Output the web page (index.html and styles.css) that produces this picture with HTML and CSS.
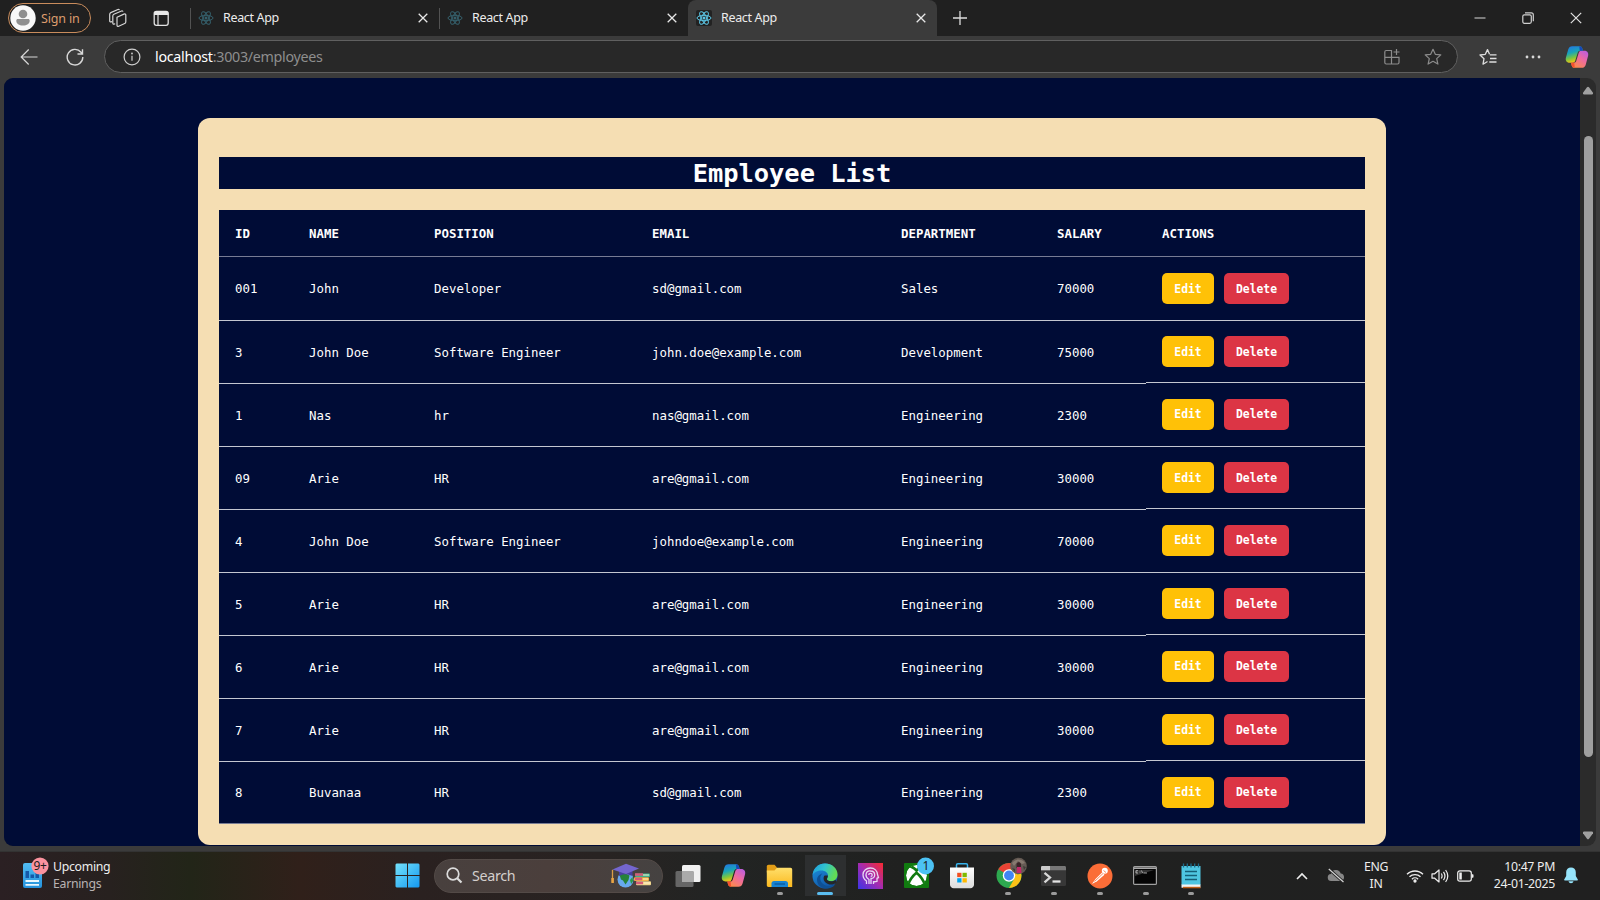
FILE: index.html
```html
<!DOCTYPE html>
<html lang="en">
<head>
<meta charset="utf-8">
<title>React App</title>
<link rel="stylesheet" href="styles.css">
</head>
<body>
<svg class="defs" width="0" height="0" aria-hidden="true">
  <defs>
    <linearGradient id="cpA" x1="0" y1="0" x2="0.3" y2="1"><stop offset="0" stop-color="#2470e8"/><stop offset=".45" stop-color="#19a5b8"/><stop offset=".75" stop-color="#7cc53f"/><stop offset="1" stop-color="#f2c518"/></linearGradient>
    <linearGradient id="cpB" x1="1" y1="0" x2="0.3" y2="1"><stop offset="0" stop-color="#b35be8"/><stop offset=".5" stop-color="#ee6aa0"/><stop offset="1" stop-color="#fb8a4c"/></linearGradient>
    <linearGradient id="win" x1="0" y1="0" x2="1" y2="1"><stop offset="0" stop-color="#74e2fb"/><stop offset="1" stop-color="#1498f0"/></linearGradient>
    <linearGradient id="news" x1="0" y1="0" x2="0" y2="1"><stop offset="0" stop-color="#52bdf3"/><stop offset="1" stop-color="#2592dc"/></linearGradient>
    <linearGradient id="fold" x1="0" y1="0" x2="0" y2="1"><stop offset="0" stop-color="#ffdf6b"/><stop offset="1" stop-color="#fbb91f"/></linearGradient>
    <linearGradient id="edgeA" x1="0" y1="0" x2="1" y2="0.3"><stop offset="0" stop-color="#1f9be0"/><stop offset=".5" stop-color="#30c3cf"/><stop offset="1" stop-color="#62dc55"/></linearGradient>
    <linearGradient id="edgeB" x1="0" y1="0" x2="0.6" y2="1"><stop offset="0" stop-color="#1d95e2"/><stop offset="1" stop-color="#1054a4"/></linearGradient>
    <linearGradient id="headG" x1="0" y1="1" x2="1" y2="0"><stop offset="0" stop-color="#3b35e8"/><stop offset=".5" stop-color="#a52bb0"/><stop offset="1" stop-color="#f92a2f"/></linearGradient>
    <linearGradient id="bag" x1="0" y1="0" x2="0" y2="1"><stop offset="0" stop-color="#ffffff"/><stop offset="1" stop-color="#dcdcdc"/></linearGradient>
    <clipPath id="ball"><circle cx="13.500" cy="18.500" r="10.500"/></clipPath>
    <symbol id="react" viewBox="0 0 16 16"><g fill="none" stroke="currentColor" stroke-width="1"><ellipse cx="8" cy="8" rx="7" ry="2.7"/><ellipse cx="8" cy="8" rx="7" ry="2.7" transform="rotate(60 8 8)"/><ellipse cx="8" cy="8" rx="7" ry="2.7" transform="rotate(120 8 8)"/></g><circle cx="8" cy="8" r="1.5" fill="currentColor"/></symbol>
    <symbol id="x" viewBox="0 0 12 12"><path d="M1.700 1.700l8.600 8.600M10.300 1.700l-8.600 8.600" fill="none" stroke="#e8e8e8" stroke-width="1.3"/></symbol>
    <symbol id="copilot" viewBox="0 0 24 24"><path d="M7.200 1.200h7.300c1.600 0 2.400.9 2.800 2.300l.6 2.200h-2.600c-1.500 0-2.300.8-2.700 2.200L10.300 15.600c-.5 1.600-1.300 2.200-2.800 2.200H4.500C1.700 17.800.2 15.600.9 12.800L3.200 4.600C3.800 2.300 5.200 1.200 7.200 1.200z" fill="url(#cpA)"/><path d="M16.800 22.800H9.500c-1.600 0-2.400-.9-2.800-2.300l-.6-2.700h2.600c1.500 0 2.300-.8 2.700-2.200l2.300-7.700c.5-1.600 1.300-2.200 2.800-2.200h3c2.800 0 4.300 2.200 3.600 5l-2.300 8.700c-.6 2.300-2 3.400-4 3.400z" fill="url(#cpB)"/><path d="M14.300 1.200c1.700 0 2.600.9 3 2.300l.6 2.200h-3.200z" fill="#1749b8"/><path d="M9.700 22.800c-1.700 0-2.600-.9-3-2.300l-.6-2.700h3.200z" fill="#f5512e"/></symbol>
  </defs>
</svg>

<div class="screen">
  <header class="tabbar">
    <div class="signin">
      <svg width="26" height="26" viewBox="0 0 26 26"><circle cx="13" cy="13" r="12.700" fill="#f8f8f8"/><circle cx="13" cy="9" r="4.300" fill="#8f8f8f"/><path d="M6.300 15.500c0-.9.7-1.500 1.500-1.500h10.400c.8 0 1.500.6 1.500 1.500 0 3.300-2.700 5-6.700 5s-6.700-1.700-6.700-5z" fill="#8f8f8f"/></svg>
      <span>Sign in</span>
    </div>
    <svg class="tool-workspaces" width="20" height="20" viewBox="0 0 20 20" fill="none" stroke="#d6d6d6" stroke-width="1.200" stroke-linejoin="round"><path d="M9 9.200l6.900-3.100c1-.4 1.900 0 1.900.9v6.800c0 .8-.4 1.400-1.100 1.700l-6 2.700c-1 .4-1.700 0-1.700-.9z"/><path d="M7.200 15.700l-1.200.4c-.7.200-1.200-.2-1.200-1V8c0-.9.4-1.500 1.100-1.800L13.500 3c.7-.3 1.300 0 1.500.7"/><path d="M4 13.600l-.9.300c-.8.200-1.400-.2-1.400-1V6.400c0-.9.400-1.500 1.100-1.800L9.900 1.500c.7-.3 1.400 0 1.600.7"/></svg>
    <svg class="tool-vertical" width="17" height="17" viewBox="0 0 17 17"><rect x="1.200" y="1.500" width="14" height="13.800" rx="2.200" fill="none" stroke="#e2e2e2" stroke-width="1.300"/><path d="M1 5V3.500C1 2 2 1 3.400 1H13c1.400 0 2.400 1 2.400 2.500V5z" fill="#e8e8e8"/><path d="M5 5v10" stroke="#e2e2e2" stroke-width="1.200"/></svg>
    <div class="tab dim"><svg class="fav" width="16" height="16"><use href="#react"/></svg><span>React App</span><svg class="close" width="12" height="12"><use href="#x"/></svg></div>
    <div class="tab dim"><svg class="fav" width="16" height="16"><use href="#react"/></svg><span>React App</span><svg class="close" width="12" height="12"><use href="#x"/></svg></div>
    <div class="tab active"><svg class="fav" width="16" height="16"><use href="#react"/></svg><span>React App</span><svg class="close" width="12" height="12"><use href="#x"/></svg></div>
    <svg class="newtab" width="16" height="16" viewBox="0 0 16 16"><path d="M8 1v14M1 8h14" stroke="#dcdcdc" stroke-width="1.300"/></svg>
    <div class="winctl">
      <svg width="12" height="12" viewBox="0 0 12 12"><path d="M.5 6h11" stroke="#c9c9c9" stroke-width="1.100"/></svg>
      <svg width="12" height="12" viewBox="0 0 12 12" fill="none" stroke="#d0d0d0" stroke-width="1.200"><rect x=".8" y="2.800" width="8.500" height="8.500" rx="1.500"/><path d="M3 .8h6.300c1.200 0 2 .8 2 2v6.400"/></svg>
      <svg width="12" height="12" viewBox="0 0 12 12"><path d="M.8.8l10.400 10.400M11.200.8L.8 11.200" stroke="#e2e2e2" stroke-width="1.200"/></svg>
    </div>
  </header>

  <div class="toolbar">
    <svg class="back" width="18" height="18" viewBox="0 0 18 18" fill="none" stroke="#d8d8d8" stroke-width="1.200"><path d="M17.500 9H1.200M8.700 1.500L1.200 9l7.500 7.500"/></svg>
    <svg class="reload" width="18" height="18" viewBox="0 0 18 18" fill="none" stroke="#d8d8d8" stroke-width="1.400"><path d="M16.800 9A7.800 7.800 0 1 1 15 4.200l1.500 1.800M16.500 1.200V6h-5"/></svg>
    <div class="address">
      <svg width="18" height="18" viewBox="0 0 18 18"><circle cx="9" cy="9" r="7.900" fill="none" stroke="#d0d0d0" stroke-width="1.200"/><path d="M9 7.800v5" stroke="#d0d0d0" stroke-width="1.200"/><circle cx="9" cy="5.500" r=".9" fill="#d0d0d0"/></svg>
      <span class="url"><b>localhost</b>:3003/employees</span>
      <svg class="apps" width="16" height="16" viewBox="0 0 16 16" fill="none" stroke="#8c8c8c" stroke-width="1.200"><path d="M7.500 15V1.500H2.300c-.9 0-1.500.6-1.500 1.500v10.500c0 .9.600 1.500 1.500 1.500h11.200c.9 0 1.500-.6 1.500-1.500V8.300H.8M12.500 0v6M9.500 3h6"/></svg>
      <svg class="star" width="18" height="18" viewBox="0 0 18 18" fill="none" stroke="#8c8c8c" stroke-width="1.200" stroke-linejoin="round"><path d="M9 1.300l2.300 5 5.500.6-4.100 3.700 1.200 5.500L9 13.300l-4.900 2.800 1.200-5.500L1.200 6.900l5.500-.6z"/></svg>
    </div>
    <svg class="favs" width="18" height="18" viewBox="0 0 18 18" fill="none" stroke="#dedede" stroke-width="1.300" stroke-linejoin="round"><path d="M10.500 6.300L8.500 1.600 6.300 6.300 1 7l4 3.700L4 16.200l4.500-2.700M10.800 6.900H17.500M11 10.500h6.500M10.300 14h7.200"/></svg>
    <svg class="dots" width="16" height="4" viewBox="0 0 16 4" fill="#d8d8d8"><circle cx="2" cy="2" r="1.400"/><circle cx="8" cy="2" r="1.400"/><circle cx="14" cy="2" r="1.400"/></svg>
    <svg class="cp" width="24" height="24"><use href="#copilot"/></svg>
  </div>

  <main class="viewport">
    <div class="page">
      <section class="card">
        <h1>Employee List</h1>
        <div class="table">
          <div class="row head"><div class="c1">ID</div><div class="c2">NAME</div><div class="c3">POSITION</div><div class="c4">EMAIL</div><div class="c5">DEPARTMENT</div><div class="c6">SALARY</div><div class="c7">ACTIONS</div></div>
          <div class="row tall"><div class="c1">001</div><div class="c2">John</div><div class="c3">Developer</div><div class="c4">sd@gmail.com</div><div class="c5">Sales</div><div class="c6">70000</div><div class="c7"><button class="edit">Edit</button><button class="del">Delete</button></div></div>
          <div class="row up first"><div class="c1">3</div><div class="c2">John Doe</div><div class="c3">Software Engineer</div><div class="c4">john.doe@example.com</div><div class="c5">Development</div><div class="c6">75000</div><div class="c7"><button class="edit">Edit</button><button class="del">Delete</button></div></div>
          <div class="row"><div class="c1">1</div><div class="c2">Nas</div><div class="c3">hr</div><div class="c4">nas@gmail.com</div><div class="c5">Engineering</div><div class="c6">2300</div><div class="c7"><button class="edit">Edit</button><button class="del">Delete</button></div></div>
          <div class="row up"><div class="c1">09</div><div class="c2">Arie</div><div class="c3">HR</div><div class="c4">are@gmail.com</div><div class="c5">Engineering</div><div class="c6">30000</div><div class="c7"><button class="edit">Edit</button><button class="del">Delete</button></div></div>
          <div class="row"><div class="c1">4</div><div class="c2">John Doe</div><div class="c3">Software Engineer</div><div class="c4">johndoe@example.com</div><div class="c5">Engineering</div><div class="c6">70000</div><div class="c7"><button class="edit">Edit</button><button class="del">Delete</button></div></div>
          <div class="row up"><div class="c1">5</div><div class="c2">Arie</div><div class="c3">HR</div><div class="c4">are@gmail.com</div><div class="c5">Engineering</div><div class="c6">30000</div><div class="c7"><button class="edit">Edit</button><button class="del">Delete</button></div></div>
          <div class="row"><div class="c1">6</div><div class="c2">Arie</div><div class="c3">HR</div><div class="c4">are@gmail.com</div><div class="c5">Engineering</div><div class="c6">30000</div><div class="c7"><button class="edit">Edit</button><button class="del">Delete</button></div></div>
          <div class="row up"><div class="c1">7</div><div class="c2">Arie</div><div class="c3">HR</div><div class="c4">are@gmail.com</div><div class="c5">Engineering</div><div class="c6">30000</div><div class="c7"><button class="edit">Edit</button><button class="del">Delete</button></div></div>
          <div class="row last"><div class="c1">8</div><div class="c2">Buvanaa</div><div class="c3">HR</div><div class="c4">sd@gmail.com</div><div class="c5">Engineering</div><div class="c6">2300</div><div class="c7"><button class="edit">Edit</button><button class="del">Delete</button></div></div>
        </div>
      </section>
    </div>
    <div class="scrollbar">
      <svg width="12" height="9" viewBox="0 0 12 9"><path d="M5 1.200Q6 .2 7 1.200l4 5.500Q11.500 8.300 10 8.500H2Q.5 8.300 1 6.700z" fill="#a0a0a0"/></svg>
      <div class="thumb"></div>
      <svg width="12" height="9" viewBox="0 0 12 9"><path d="M5 7.800Q6 8.800 7 7.800l4-5.500Q11.500.700 10 .5H2Q.5.700 1 2.300z" fill="#a0a0a0"/></svg>
    </div>
  </main>

  <footer class="taskbar">
    <div class="widget">
      <svg width="26" height="32" viewBox="0 0 26 32"><rect x="0" y="6" width="19" height="25" rx="2" fill="url(#news)"/><path d="M2.500 14h3.500v7H2.500zM7.500 17.500h3.500v3.500H7.500zM12.500 15.500H16v5.500h-3.500z" fill="#1559a8"/><path d="M2.500 24h13.500M2.500 27.800h13.500" stroke="#e9f8ff" stroke-width="1.800"/><circle cx="17" cy="9" r="8.600" fill="#fb939f"/><text x="10.500" y="13.300" class="badge-text">9+</text></svg>
      <div class="wtext"><span>Upcoming</span><span class="sub">Earnings</span></div>
    </div>
    <svg class="start" width="25" height="25" viewBox="0 0 25 25"><path d="M1.500.5H12v11.500H.5V1.500zM13 .5h10.500l1 1V12H13zM.5 13H12v11.500H1.500l-1-1zM13 13h11.500v10.500l-1 1H13z" fill="url(#win)"/></svg>
    <div class="search">
      <svg width="17" height="17" viewBox="0 0 17 17" fill="none" stroke="#dcdcdc"><circle cx="7" cy="7" r="5.800" stroke-width="1.700"/><path d="M11.200 11.200L15.500 15.500" stroke-width="2.200"/></svg>
      <span>Search</span>
      <svg class="school" width="42" height="26" viewBox="0 0 42 26"><circle cx="15.500" cy="16.500" r="8" fill="#67a9ef"/><path d="M9.500 12l5-2 5 2.500-1 4.500-3 4.500-2.500-4-2-1z" fill="#25823a"/><path d="M20 17l2.500-3 .6 4-2 3z" fill="#2b9a45"/><path d="M9 8v5q6-3.500 13.500 0V8z" fill="#49409c"/><path d="M2.500 6.500L16 .8 29 5.500 16 11z" fill="#7466cf"/><path d="M2.500 6.800v12" stroke="#dc9d45" stroke-width="1.300"/><path d="M1.300 15h2.600v5H1.300z" fill="#e8a545"/><rect x="25" y="10.500" width="15" height="3.600" rx="1" fill="#3faf8e"/><rect x="24" y="14.300" width="15" height="3.800" rx="1" fill="#f2b548"/><rect x="26" y="18.200" width="15" height="4" rx="1" fill="#f1d78f"/><path d="M25 11.500h8M25 16h7M26 20h7" stroke="#d65a78" stroke-width="2.300"/><path d="M33 12h6M33 16h5M34 20h6" stroke="#fff3cf" stroke-width="1"/></svg>
    </div>
    <div class="apps-row">
      <div class="app"><svg width="26" height="24" viewBox="0 0 26 24"><rect x="7" y="1" width="18.500" height="17" rx="1.500" fill="#f1f1f1"/><rect x=".5" y="7" width="18" height="16" rx="1.500" fill="#666"/><path d="M7 7h11.500v11H7z" fill="#aaa"/></svg></div>
      <div class="app"><svg width="25" height="25"><use href="#copilot"/></svg></div>
      <div class="app run"><svg width="27" height="24" viewBox="0 0 27 24"><path d="M.8 2.500C.8 1.500 1.500.8 2.500.8H8.500L11 3.500v5H.8z" fill="#e39e17"/><path d="M.8 6.500H8.500L11 3.800h13.500c1 0 1.700.7 1.700 1.700V23H2.500c-1 0-1.700-.7-1.700-1.700z" fill="url(#fold)"/><path d="M5.500 23v-3.500c0-1.500 1-2.500 2.500-2.500h11.500c1.500 0 2.500 1 2.500 2.500V23z" fill="#1683d2"/><path d="M8.500 20h10.500" stroke="#0c5ea3" stroke-width="1.500"/></svg></div>
      <div class="app run on"><svg width="26" height="26" viewBox="0 0 26 26"><circle cx="13" cy="13" r="12.500" fill="url(#edgeB)"/><path d="M.6 12C1.200 5.200 6.500.5 13 .5c7 0 12.500 4.800 12.500 11 0 4.300-3 6.700-6.500 6.700-2.700 0-4.300-1.200-4-2.500.5-1 1-1.500 1-3C16 9.800 13 7.600 9.500 7.600 5.500 7.600 1.700 9.500.6 12z" fill="url(#edgeA)"/><path d="M10.500 10.500c-2.700 2-3 6.500-.5 9.500 3 3.500 8.500 4.200 13.500.8-1.500 3.300-5.500 5-10 4.800C8 24.500 5 21 5 16.700c0-2.700 2.300-5.500 5.500-6.200z" fill="#0e5095"/><path d="M15 15.700c-.3 1.300 1.300 2.500 4 2.500 1.700 0 3.300-.5 4.500-1.500l1 2.500c-2.500 2.500-6 3-9 1.500-3.500-1.500-4.800-5-3.300-8 2.300-.5 3.800 0 3.800 0z" fill="#242628"/></svg></div>
      <div class="app"><svg width="25" height="26" viewBox="0 0 25 26" fill="none" stroke="#e8d8f4" stroke-width="1.300"><rect width="25" height="26" fill="url(#headG)" stroke="none"/><path d="M8.500 21v-3C5.500 16 5 13.500 5 11.500 5.200 7.500 8.500 5 12.300 5c4.300 0 7 2.800 7.200 6.500l1 3.200-1.500.6v3c-2 .6-3.500.4-3.500.4V21"/><path d="M11 21v-4.500C8.500 15 7.800 13.300 8 11.700 8.300 9.300 10.300 7.800 12.500 8c2.500 0 4.200 1.800 4.200 4s-1.700 3.600-3.700 3.500V21M10.700 12c0-2.300 3.500-2.300 3.500 0 0 1.500-1.500 1.500-1.500 1.500"/></svg></div>
      <div class="app"><svg width="32" height="32" viewBox="0 0 32 32" class="badged"><rect x="1" y="6" width="25" height="25" rx="1" fill="#117b10"/><g clip-path="url(#ball)"><circle cx="13.500" cy="18.500" r="10.500" fill="#fff"/><path d="M4 30.500C6 24 9.500 19 13.500 15.800 17.500 19 21 24 23 30.500M5.500 9.500C8.500 9 11.500 11.500 13.500 13.500 15.500 11.500 18.500 9 21.500 9.500" fill="none" stroke="#117b10" stroke-width="2.700"/></g></g><circle cx="22.500" cy="9" r="8.500" fill="#4cc2f4"/><text x="19.600" y="13.200" class="badge-text">1</text></svg></div>
      <div class="app"><svg width="26" height="27" viewBox="0 0 26 27"><path d="M7.500 8V3c0-.8.5-1.300 1.300-1.300h8.400c.8 0 1.300.5 1.300 1.300v5" fill="none" stroke="#38b4ed" stroke-width="1.500"/><path d="M1 5.500h24v17c0 2-1.500 3.700-3.700 3.700H4.700C2.500 26.200 1 24.500 1 22.500z" fill="url(#bag)"/><path d="M8.200 10.800h4.300v4.300H8.200z" fill="#f25022"/><path d="M13.500 10.800h4.300v4.300h-4.300z" fill="#7fba00"/><path d="M8.200 16.200h4.300v4.300H8.200z" fill="#00a4ef"/><path d="M13.500 16.200h4.300v4.300h-4.300z" fill="#ffb900"/></svg></div>
      <div class="app run"><svg width="32" height="32" viewBox="0 0 32 32" class="badged chrome"><circle cx="14" cy="18.500" r="12.500" fill="#2da94f"/><path d="M14 18.500L3.200 12.200A12.500 12.500 0 0 1 24.800 12.200z" fill="#ea4335"/><path d="M14 12.300h10.800A12.500 12.500 0 0 1 14 31l5.400-9.400z" fill="#fbc116"/><circle cx="14" cy="18.500" r="6.200" fill="#fff"/><circle cx="14" cy="18.500" r="4.900" fill="#4285f4"/><circle cx="23.500" cy="9" r="8.300" fill="#655b54"/><path d="M17 6c3-4 9-5 13 0l-3 1-4-3-4 5z" fill="#877a70"/><path d="M21.500 7c1-2.500 3.500-2.500 4.500 0v4h-4.500z" fill="#3a2428"/><path d="M22 10h4l.5 6h-5z" fill="#c52768"/><path d="M17 11l3 1v3zM28 9l3 1-2 3z" fill="#3f3d38"/></svg></div>
      <div class="app run"><svg width="25" height="20" viewBox="0 0 25 20"><rect width="25" height="20" rx="1.500" fill="#373737"/><path d="M0 4.200V1.500C0 .6.600 0 1.500 0h22c.9 0 1.500.6 1.500 1.500v2.700z" fill="#777"/><path d="M0 4.200V1.500C0 .6.600 0 1.500 0H9v4.200z" fill="#cacaca"/><path d="M3.500 6.800L9 11.500l-5.500 4.800" fill="none" stroke="#d8d8d8" stroke-width="2.300"/><path d="M11.500 15.500h8" stroke="#e4e4e4" stroke-width="2.300"/></svg></div>
      <div class="app run"><svg width="26" height="26" viewBox="0 0 26 26"><circle cx="13" cy="13" r="12.500" fill="#fb6d37"/><circle cx="17.800" cy="7.800" r="3" fill="#fff"/><path d="M15.300 9.300L8.500 16 5 21l5-2.800 7.500-6.500z" fill="#fff"/><path d="M7.500 18.500l8.500-8M16.500 7.500l2.500 2" stroke="#fb6d37" stroke-width=".8"/></svg></div>
      <div class="app run"><svg width="24" height="19" viewBox="0 0 24 19"><rect x=".6" y=".6" width="22.800" height="17.800" rx="1" fill="#050505" stroke="#a0a0a0" stroke-width="1.200"/><path d="M1 2.200h22" stroke="#bcbcbc" stroke-width="1.400"/><path d="M2 10V4h19z" fill="#343434"/><path d="M3 4.700H5M3 4.700v2.300h2M7 4.800v.7M7 6.500v.6M8.500 4.500l1 2.500M10.500 7h3.500" stroke="#ddd" stroke-width=".7" fill="none"/></svg></div>
      <div class="app run"><svg width="20" height="27" viewBox="0 0 20 27"><path d="M.5 4h19v19H.5z" fill="#4fc6e2"/><path d="M.5 22.500h19v3.200H.5z" fill="#f4f4f4"/><path d="M2 24.800h17.500v1.500H2z" fill="#bd5f18"/><path d="M2.500 1.500v4M6.300 1.500v4M10 1.500v4M13.700 1.500v4M17.500 1.500v4" stroke="#1c6d8b" stroke-width="1.300"/><path d="M4 9.500h12M4 13.500h12M4 17.500h12" stroke="#155f78" stroke-width="1.500"/></svg></div>
    </div>
    <div class="tray">
      <svg class="chev" width="12" height="8" viewBox="0 0 12 8"><path d="M1 7l5-5 5 5" fill="none" stroke="#eee" stroke-width="1.600"/></svg>
      <svg class="cloud" width="18" height="15" viewBox="0 0 18 15"><path d="M4.500 13A3.500 3.500 0 0 1 4 6a5 5 0 0 1 9.700-.5A3.800 3.800 0 0 1 14 13z" fill="#878787"/><path d="M2 1.200L16.500 14" stroke="#202020" stroke-width="3"/><path d="M1.800 1L16.500 14" stroke="#d5d5d5" stroke-width="1.200"/></svg>
      <div class="lang"><span>ENG</span><span>IN</span></div>
      <svg class="wifi" width="18" height="14" viewBox="0 0 18 14" fill="none" stroke="#eee" stroke-width="1.300"><path d="M1 5.300a11.300 11.300 0 0 1 16 0M3.500 7.800a7.800 7.800 0 0 1 11 0M5.900 10.200a4.400 4.400 0 0 1 6.200 0"/><circle cx="9" cy="12" r="1" fill="#eee"/></svg>
      <svg class="sound" width="18" height="14" viewBox="0 0 18 14" fill="none" stroke="#eee" stroke-width="1.200"><path d="M1 4.800h2.700L8 1v12L3.700 9.200H1zM10.300 4.500q1.600 2.500 0 5M12.500 2.800q2.900 4.200 0 8.400M14.600 1q4.400 6 0 12" stroke-linejoin="round"/></svg>
      <svg class="batt" width="17" height="12" viewBox="0 0 17 12"><rect x=".7" y=".8" width="13.600" height="10.400" rx="2.200" fill="none" stroke="#eee" stroke-width="1.200"/><rect x="2.300" y="2.500" width="2.500" height="7" fill="#eee"/><path d="M14.800 4.300h.7c.6 0 1 .4 1 1v1.400c0 .6-.4 1-1 1h-.7z" fill="#eee"/></svg>
      <div class="clock"><span>10:47 PM</span><span>24-01-2025</span></div>
      <svg class="bell" width="14" height="17" viewBox="0 0 14 17"><path d="M7 .5c2.800 0 4.800 2 4.800 4.800V9l2 3.500c.2.500 0 .9-.5.900H.7c-.5 0-.7-.4-.5-.9L2.200 9V5.300C2.200 2.500 4.200.5 7 .5zM4.500 14.300h5c-.3 1.200-1.200 2-2.500 2s-2.200-.8-2.500-2z" fill="#96e4fb"/></svg>
    </div>
  </footer>
</div>
</body>
</html>
```

FILE: styles.css
```css
* { box-sizing: border-box; }
body { margin: 0; background: #3b3b3b; font-family: "Noto Sans", "Open Sans", sans-serif; overflow: hidden; }
svg { display: block; flex: none; }
.defs { position: absolute; }
.screen { width: 1600px; height: 900px; display: flex; flex-direction: column; background: #3b3b3b; }

/* Tab strip */
.tabbar { height: 36px; flex: none; background: #202020; display: flex; align-items: center; }
.signin { width: 83px; height: 30px; margin-left: 8px; border: 1.500px solid #c98c5c; border-radius: 15px; display: flex; align-items: center; padding-left: 1px; gap: 5px; color: #dc9d6e; font-size: 12.500px; letter-spacing: -.15px; }
.tool-workspaces { margin-left: 17px; }
.tool-vertical { margin-left: 25px; }
.tab { width: 249px; height: 36px; display: flex; align-items: center; color: #ececec; font-size: 12.500px; letter-spacing: -.35px; background: linear-gradient(#525252, #525252) 0 50% / 1px 21px no-repeat; }
.tool-vertical + .tab { margin-left: 20px; }
.tab .fav { margin-left: 8px; margin-right: 9px; color: #35606c; }
.tab span { flex: 1; margin-top: -1px; }
.tab .close { margin-right: 10px; }
.tab.active { background: #3b3b3b; border-radius: 8px 8px 0 0; }
.tab.active .fav { color: #5cc5e4; background: #222; border-radius: 2px; }
.newtab { margin-left: 15px; }
.winctl { margin-left: auto; display: flex; gap: 36px; padding-right: 18px; }

/* Toolbar */
.toolbar { height: 42px; flex: none; display: flex; align-items: center; padding-bottom: 1px; background: #3b3b3b; }
.back { margin-left: 20px; }
.reload { margin-left: 28px; }
.address { width: 1354px; height: 33px; margin-left: 20px; border: 1px solid #606060; border-radius: 17px; background: #282828; display: flex; align-items: center; padding-left: 18px; }
.url { margin-left: 14px; font-size: 14.300px; color: #8e8e8e; flex: 1; letter-spacing: -.3px; }
.url b { font-weight: 400; color: #fff; }
.address .apps { margin-right: 24px; }
.address .star { margin-right: 15px; }
.favs { margin-left: 21px; }
.dots { margin-left: 28px; }
.cp { margin-left: 24px; }

/* Browser content */
.viewport { width: 1592px; height: 768px; flex: none; margin-left: 4px; border-radius: 9px; overflow: hidden; display: flex; background: #2b2b2b; }
.page { width: 1576px; background: #000c36; padding: 40px 0 0 194px; font-family: "DejaVu Sans Mono", monospace; color: #fff; }
.card { width: 1188px; height: 727px; padding: 39px 21px 0; background: #f5deb3; border-radius: 12px; }
.card h1 { height: 32px; margin: 0 0 21px; background: #000c36; text-align: center; font-size: 25.400px; line-height: 33px; font-weight: 700; }
.table { background: #000c36; font-size: 12.400px; }
.row { display: flex; height: 63px; }
.row > div { padding: 0 0 0 16px; border-bottom: 1px solid #c4c7d1; display: flex; align-items: center; }
.row.head { height: 47px; font-weight: 700; }
.row.head > div { border-color: #777c94; padding-top: 1px; }
.row.tall { height: 64px; }
.row.last { height: 62px; }
.row.last > div { border-color: #777c94; }
.c1 { width: 74px; }
.c2 { width: 125px; }
.c3 { width: 218px; }
.c4 { width: 249px; }
.c5 { width: 156px; }
.c6 { width: 105px; }
.c7 { width: 219px; }
.row.up .c7 { margin-bottom: 1px; }
.row:not(.head) .c7 { padding-bottom: 2px; }
.row.up .c7 { padding-bottom: 0; }
.row.tall .c7, .row.up.first .c7 { padding-bottom: 0; }
.row.last .c7 { padding-bottom: 1px; }
.row button { height: 31px; border: 0; border-radius: 5px; padding: 0; margin: 0 10px 0 0; color: #fff; font: 700 11.400px "DejaVu Sans Mono", monospace; }
.row .edit { width: 52px; background: #ffc107; }
.row .del { width: 65px; background: #dc3545; }
.scrollbar { width: 16px; display: flex; flex-direction: column; align-items: center; padding: 8px 0 6px; }
.thumb { width: 9px; height: 621px; margin-top: 41px; margin-bottom: auto; border-radius: 5px; background: #9f9f9f; }

/* Taskbar */
.taskbar { height: 49px; margin-top: 5px; flex: none; display: flex; align-items: center; padding-bottom: 1px; border-top: 1px solid #333; background: linear-gradient(90deg, #2b2023 0, #27211f 110px, #222518 190px, #30201a 300px, #2a2120 420px, #282322 600px, #222423 720px, #202120 900px, #202020 1600px); color: #eee; }
.widget { display: flex; margin-left: 23px; width: 372px; align-items: center; gap: 4px; }
.widget svg { margin-top: -5px; }
.wtext, .lang, .clock { display: flex; flex-direction: column; font-size: 12.300px; line-height: 16.500px; letter-spacing: -.3px; }
.wtext .sub { color: #b9b3b3; }
.badge-text { font: 12px "Noto Sans", sans-serif; fill: #1c1c1c; letter-spacing: -.3px; }
.search { width: 229px; height: 34px; margin-left: 14px; border-radius: 17px; border: 1px solid #534a47; background: linear-gradient(90deg, #48403e, #4b3f3c 50%, #454241); display: flex; align-items: center; padding-left: 11px; gap: 9px; font-size: 14.300px; color: #d4cfcd; letter-spacing: -.35px; }
.search .school { margin-left: auto; margin-right: 10px; }
.apps-row { display: flex; margin-left: 2px; }
.app { width: 45.750px; height: 47px; display: flex; align-items: center; justify-content: center; position: relative; }
.app.run::after { content: ""; position: absolute; left: 20px; bottom: 4px; width: 6px; height: 3px; border-radius: 2px; background: #9b9b9b; }
.app.on { background: linear-gradient(#2d2f30, #2d2f30) 50% 50% / 41px 41px no-repeat; }
.app.on::after { left: 15px; width: 16px; background: #5abdf0; }
.app .badged { margin-top: -6px; margin-left: 5px; }
.tray { margin-left: auto; display: flex; align-items: center; padding-right: 22px; }
.cloud { margin-left: 19px; }
.lang { width: 26px; margin-left: 18px; align-items: center; }
.wifi { margin-left: 17px; }
.sound { margin-left: 7px; }
.batt { margin-left: 8px; }
.clock { width: 66px; margin-left: 15px; align-items: flex-end; }
.bell { margin-left: 9px; }
```
